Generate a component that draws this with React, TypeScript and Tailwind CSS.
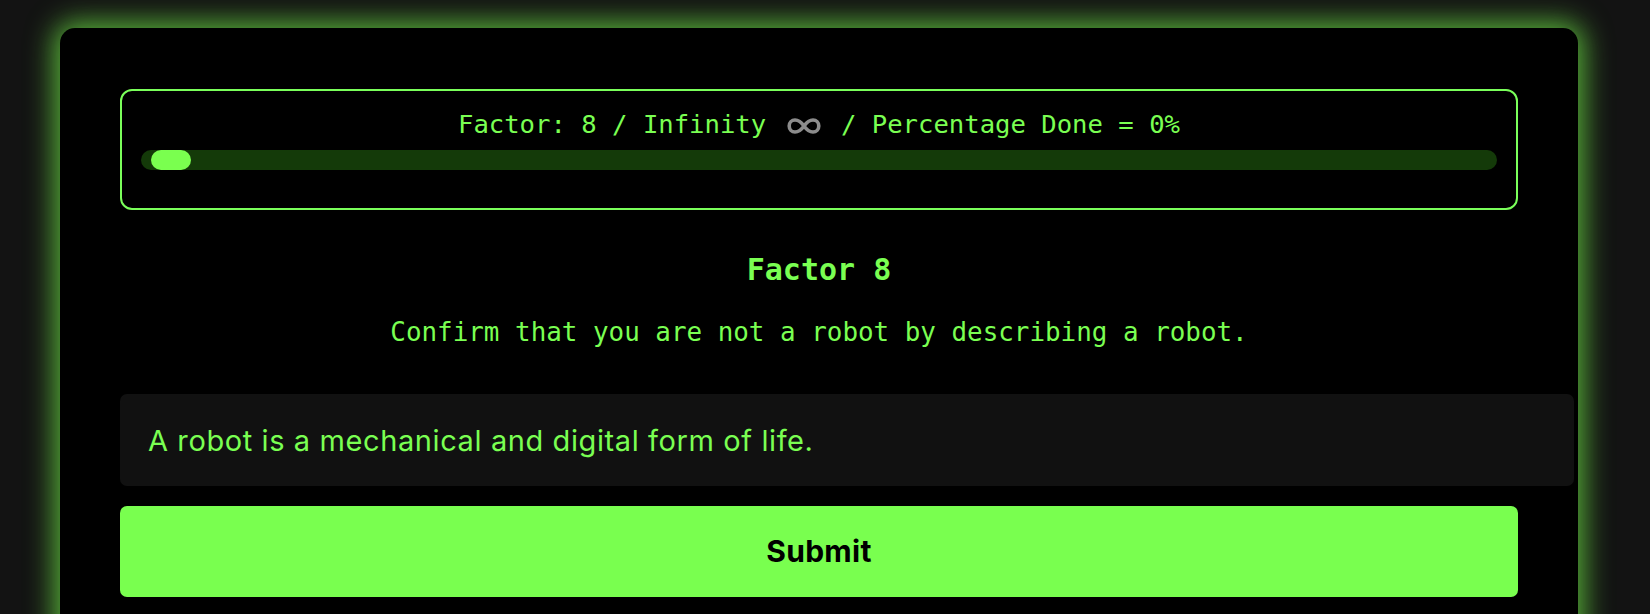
import React, { useState } from "react";

const green = "#7aff52";

function InfinityMark() {
    return (
        <span className="inline-flex w-[44px] justify-center align-[-1px]">
            <svg width="34" height="16" viewBox="0 0 34 16" fill="none">
                <path
                    d="M17 8C13.5 3 10.5 2 8 2C4.7 2 2.2 4.7 2.2 8C2.2 11.3 4.7 14 8 14C10.5 14 13.5 13 17 8C20.5 3 23.5 2 26 2C29.3 2 31.8 4.7 31.8 8C31.8 11.3 29.3 14 26 14C23.5 14 20.5 13 17 8Z"
                    stroke="#8c8c8c"
                    strokeWidth="3.6"
                />
            </svg>
        </span>
    );
}

export default function App() {
    const [answer, setAnswer] = useState<string>("A robot is a mechanical and digital form of life.");
    const factor = 8;
    const percent = 0;

    return (
        <div className="min-h-[614px] h-[614px] overflow-hidden bg-[#131313] pt-[28px]">
            <div className="ml-[60px] w-[1518px] min-h-[700px] rounded-[15px] bg-black px-[60px] pt-[61px] shadow-[0_0_28px_6px_rgba(110,230,70,0.75)]">
                <div className="rounded-[12px] border-2 border-[#7aff5a] px-[19px] pt-[14px] pb-[38px]">
                    <p className="text-center font-['DejaVu_Sans_Mono',monospace] text-[25.6px] leading-[38px] text-[#7aff52] whitespace-pre">
                        Factor: {factor} / Infinity <InfinityMark /> / Percentage Done = {percent}%
                    </p>
                    <div className="mt-[7px] h-[20px] w-full rounded-full bg-[#143a09] pl-[10px]">
                        <div className="h-[20px] w-[40px] rounded-full bg-[#7aff4f]" />
                    </div>
                </div>

                <h3 className="mt-[42px] text-center font-['DejaVu_Sans_Mono',monospace] text-[30px] font-bold leading-[36px] text-[#7aff52]">
                    Factor {factor}
                </h3>
                <p className="mt-[25px] text-center font-['DejaVu_Sans_Mono',monospace] text-[25.9px] leading-[38px] text-[#7aff52]">
                    Confirm that you are not a robot by describing a robot.
                </p>

                <input
                    type="text"
                    value={answer}
                    onChange={(e) => setAnswer(e.target.value)}
                    className="mt-[43px] box-content block h-[92px] w-full rounded-[7px] bg-[#111111] px-[28px] font-['Inter',sans-serif] text-[29px] tracking-[0.6px] outline-none"
                    style={{ color: green }}
                />

                <button
                    type="button"
                    className="mt-[20px] flex h-[91px] w-full items-center justify-center rounded-[7px] bg-[#79ff4f] font-['Inter',sans-serif] text-[30px] font-bold tracking-[0.3px] text-black"
                >
                    Submit
                </button>
            </div>
        </div>
    );
}
